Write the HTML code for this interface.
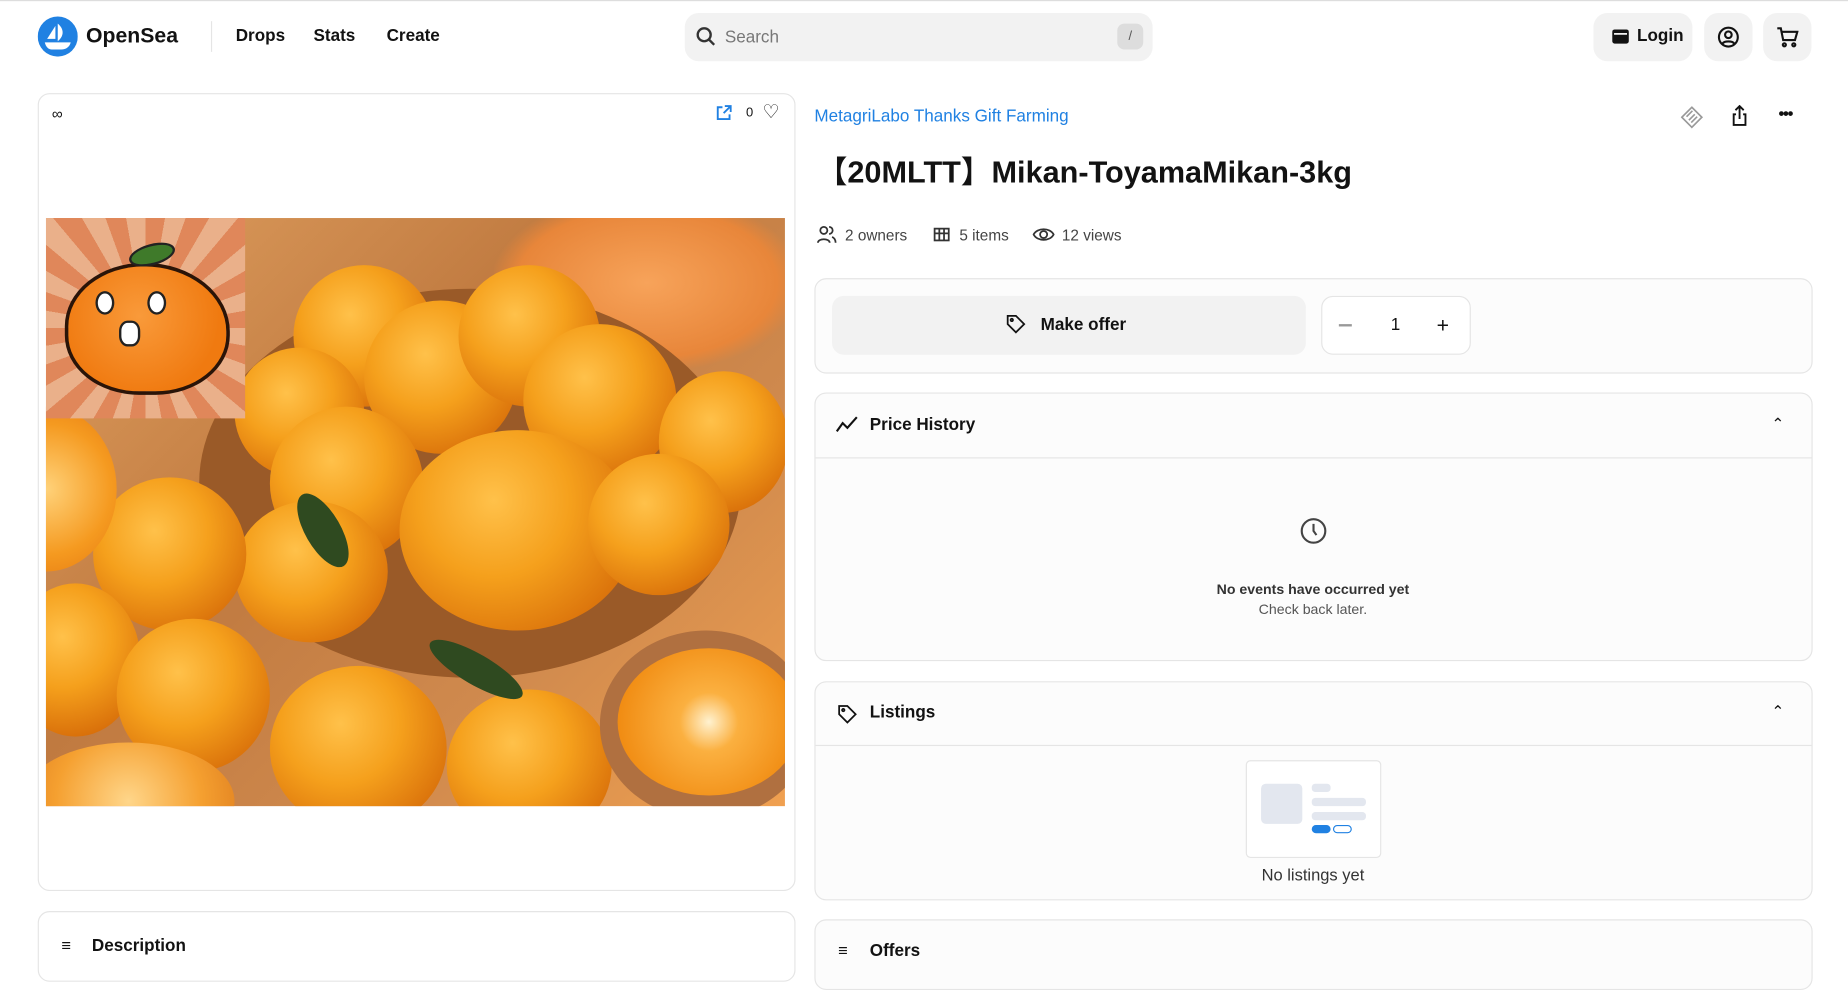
<!DOCTYPE html>
<html><head><meta charset="utf-8"><style>
*{box-sizing:border-box;margin:0;padding:0}
html,body{width:1848px;height:949px;overflow:hidden;background:#fff}
#w{position:absolute;left:0;top:0;width:1568px;height:805px;transform:scale(1.17857);transform-origin:0 0;font-family:"Liberation Sans",sans-serif;color:#121212}
.a{position:absolute}
.card{position:absolute;border:1px solid #e5e5e5;border-radius:10px;background:#fff}
.rc{background:#fcfcfc}
.btn{position:absolute;background:#f2f2f2;border-radius:12px}
.o{position:absolute;border-radius:50%;background:radial-gradient(circle at 40% 35%,#ffc14a 0%,#f5a01c 40%,#d9700a 80%,#8a3c05 100%)}
.h{font-size:14.5px;font-weight:600}
</style></head><body><div id="w">
<div class="a" style="left:0;top:0;width:1568px;height:1px;background:#ddd"></div>
<svg class="a" style="left:32px;top:14px" width="34" height="34" viewBox="0 0 34 34"><circle cx="17" cy="17" r="17" fill="#2081e2"/><path d="M8 19 L15 8 V19 Z" fill="#fff"/><path d="M17 6 C22 10 23 16 17 21 Z" fill="#fff"/><path d="M6 22 H28 C27 26 24 28 20 28 H12 C9 28 7 26 6 22 Z" fill="#fff"/></svg>
<div class="a" style="left:73px;top:20px;font-size:18px;font-weight:bold">OpenSea</div>
<div class="a" style="left:179px;top:18px;width:1px;height:26px;background:#e5e5e5"></div>
<div class="a h" style="left:200px;top:23px">Drops</div>
<div class="a h" style="left:266px;top:23px">Stats</div>
<div class="a h" style="left:328px;top:23px">Create</div>
<div class="btn" style="left:581px;top:11px;width:397px;height:41px"></div>
<svg class="a" style="left:590px;top:22px" width="18" height="18" viewBox="0 0 18 18" fill="none" stroke="#333" stroke-width="2"><circle cx="7.5" cy="7.5" r="5.5"/><path d="M11.5 11.5L16 16"/></svg>
<div class="a" style="left:615px;top:24px;font-size:14.5px;color:#777">Search</div>
<div class="a" style="left:948px;top:20px;width:22px;height:22px;background:#ddd;border-radius:6px;font-size:11px;color:#555;text-align:center;line-height:22px">/</div>
<div class="btn" style="left:1352px;top:11px;width:84px;height:41px"></div>
<svg class="a" style="left:1367px;top:24px" width="16" height="14" viewBox="0 0 16 14"><rect x="1" y="1" width="14" height="12" rx="2" fill="#121212"/><rect x="2.5" y="4" width="11" height="1.5" fill="#f2f2f2"/></svg>
<div class="a h" style="left:1389px;top:23px">Login</div>
<div class="btn" style="left:1446px;top:11px;width:41px;height:41px"></div>
<svg class="a" style="left:1457px;top:22px" width="19" height="19" viewBox="0 0 19 19" fill="none" stroke="#121212" stroke-width="1.8"><circle cx="9.5" cy="9.5" r="8"/><circle cx="9.5" cy="7.5" r="2.8"/><path d="M4.5 15c1.5-2.5 8.5-2.5 10 0"/></svg>
<div class="btn" style="left:1496px;top:11px;width:41px;height:41px"></div>
<svg class="a" style="left:1507px;top:22px" width="19" height="19" viewBox="0 0 19 19" fill="none" stroke="#121212" stroke-width="1.8"><path d="M1 2h3l2 10h10l2-7H5"/><circle cx="7" cy="16" r="1.3"/><circle cx="15" cy="16" r="1.3"/></svg>

<div class="card" style="left:32px;top:79px;width:643px;height:677px"></div>
<div class="a" style="left:44px;top:89px;font-size:13px">∞</div>
<svg class="a" style="left:607px;top:89px" width="14" height="14" viewBox="0 0 14 14" fill="none" stroke="#2081e2" stroke-width="1.6"><path d="M6 2H2v10h10V8M8 1h5v5M13 1L7 7"/></svg>
<div class="a" style="left:633px;top:90px;font-size:11px">0</div>
<div class="a" style="left:647px;top:85px;font-size:16px">♡</div>
<div class="a" style="left:39px;top:185px;width:627px;height:499px;overflow:hidden;background:linear-gradient(135deg,#e0a060,#c07a40 40%,#d08a4e 70%,#f0a050)">
 <div class="a" style="left:380px;top:-20px;width:260px;height:150px;background:radial-gradient(ellipse at 50% 50%,#f7a35a,#e8863a 60%,transparent 72%)"></div>
 <div class="a" style="left:130px;top:60px;width:460px;height:330px;border-radius:50%;background:#9a5a28"></div>
 <div class="o" style="left:210px;top:40px;width:120px;height:120px"></div>
 <div class="o" style="left:270px;top:70px;width:130px;height:130px"></div>
 <div class="o" style="left:350px;top:40px;width:120px;height:120px"></div>
 <div class="o" style="left:405px;top:90px;width:130px;height:130px"></div>
 <div class="o" style="left:160px;top:110px;width:110px;height:110px"></div>
 <div class="o" style="left:520px;top:130px;width:110px;height:120px"></div>
 <div class="o" style="left:190px;top:160px;width:130px;height:130px"></div>
 <div class="o" style="left:300px;top:180px;width:200px;height:170px"></div>
 <div class="o" style="left:460px;top:200px;width:120px;height:120px"></div>
 <div class="o" style="left:160px;top:240px;width:130px;height:120px"></div>
 <div class="o" style="left:40px;top:220px;width:130px;height:130px"></div>
 <div class="o" style="left:-30px;top:310px;width:110px;height:130px"></div>
 <div class="o" style="left:60px;top:340px;width:130px;height:130px"></div>
 <div class="o" style="left:190px;top:380px;width:150px;height:140px"></div>
 <div class="o" style="left:340px;top:400px;width:140px;height:130px"></div>
 <div class="a" style="left:470px;top:350px;width:180px;height:160px;border-radius:50%;background:#b07040"></div>
 <div class="a" style="left:485px;top:365px;width:155px;height:125px;border-radius:50%;background:radial-gradient(circle,#fff2d0 0%,#fbb040 25%,#f08a10 80%)"></div>
 <div class="a" style="left:-60px;top:160px;width:120px;height:140px;border-radius:50%;background:radial-gradient(circle,#ffd27a,#f59a20 60%,#e57810)"></div>
 <div class="a" style="left:-20px;top:445px;width:180px;height:100px;border-radius:50%;background:radial-gradient(circle,#ffd68a,#f5a030 60%,#e08020)"></div>
 <div class="a" style="left:200px;top:250px;width:70px;height:30px;border-radius:50%;background:#2f4a20;transform:rotate(60deg)"></div>
 <div class="a" style="left:320px;top:370px;width:90px;height:26px;border-radius:50%;background:#2f4a20;transform:rotate(30deg)"></div>
 <div class="a" style="left:0;top:0;width:169px;height:170px;background:repeating-conic-gradient(from 0deg at 50% 55%,#e0875a 0 10deg,#eab08a 10deg 20deg)"></div>
 <div class="a" style="left:16px;top:38px;width:140px;height:112px;border-radius:48% 52% 45% 45%;background:radial-gradient(circle at 45% 40%,#f99a3a,#f07a10 70%);border:3px solid #2a1408"></div>
 <div class="a" style="left:42px;top:62px;width:16px;height:20px;border-radius:50%;background:#fff;border:2px solid #222"></div>
 <div class="a" style="left:86px;top:62px;width:16px;height:20px;border-radius:50%;background:#fff;border:2px solid #222"></div>
 <div class="a" style="left:62px;top:87px;width:18px;height:22px;border-radius:40%;background:#fff;border:2px solid #222"></div>
 <div class="a" style="left:70px;top:22px;width:40px;height:18px;border-radius:50%;background:#3f7a2a;border:2px solid #222;transform:rotate(-15deg)"></div>
</div>
<div class="card" style="left:32px;top:773px;width:643px;height:60px"></div>
<div class="a" style="left:52px;top:794px;font-size:14px">≡</div>
<div class="a h" style="left:78px;top:795px">Description</div>

<div class="a" style="left:691px;top:91px;font-size:14.5px;color:#2081e2">MetagriLabo Thanks Gift Farming</div>
<svg class="a" style="left:1426px;top:90px" width="19" height="19" viewBox="0 0 19 19" fill="none" stroke="#999" stroke-width="1.4"><path d="M9.5 1L18 9.5 9.5 18 1 9.5Z"/><path d="M5 9l5-5M7 12l5-5M9 14l5-5"/></svg>
<svg class="a" style="left:1469px;top:89px" width="14" height="18" viewBox="0 0 14 18" fill="none" stroke="#121212" stroke-width="1.6"><path d="M7 12V1M3.5 4.5L7 1l3.5 3.5M4 8H2v9h10V8h-2"/></svg>
<div class="a" style="left:1509px;top:88px;font-size:14px;font-weight:bold;letter-spacing:-1px">•••</div>
<div class="a" style="left:693px;top:126px;font-size:26px;font-weight:600;font-family:'Liberation Sans','Noto Sans CJK JP',sans-serif">【20MLTT】Mikan-ToyamaMikan-3kg</div>
<svg class="a" style="left:693px;top:191px" width="17" height="16" viewBox="0 0 17 16" fill="none" stroke="#333" stroke-width="1.5"><circle cx="6" cy="4.5" r="3"/><path d="M1 15c0-4 10-4 10 0M10.5 1.5a3 3 0 010 6M13 10c2 .8 3 2.5 3 5"/></svg>
<div class="a" style="left:717px;top:192px;font-size:13px;color:#444">2 owners</div>
<svg class="a" style="left:792px;top:193px" width="14" height="12" viewBox="0 0 14 12" fill="none" stroke="#333" stroke-width="1.5"><rect x="1" y="1" width="12" height="10"/><path d="M1 5h12M5 1v10M9 1v10"/></svg>
<div class="a" style="left:814px;top:192px;font-size:13px;color:#444">5 items</div>
<svg class="a" style="left:876px;top:192px" width="19" height="14" viewBox="0 0 19 14" fill="none" stroke="#333" stroke-width="1.5"><path d="M1 7C4 1 15 1 18 7 15 13 4 13 1 7Z"/><circle cx="9.5" cy="7" r="3"/></svg>
<div class="a" style="left:901px;top:192px;font-size:13px;color:#444">12 views</div>

<div class="card rc" style="left:691px;top:236px;width:847px;height:81px"></div>
<div class="a" style="left:706px;top:251px;width:402px;height:50px;background:#f2f2f2;border-radius:10px"></div>
<svg class="a" style="left:853px;top:266px" width="18" height="18" viewBox="0 0 18 18" fill="none" stroke="#121212" stroke-width="1.5"><path d="M2 2h7l7 7-7 7-7-7Z"/><circle cx="5.5" cy="5.5" r="1"/></svg>
<div class="a h" style="left:883px;top:268px">Make offer</div>
<div class="a" style="left:1121px;top:251px;width:127px;height:50px;border:1px solid #e5e5e5;border-radius:10px;background:#fff"></div>
<div class="a" style="left:1136px;top:275px;width:11px;height:1.5px;background:#999"></div>
<div class="a" style="left:1180px;top:268px;font-size:14.5px">1</div>
<div class="a" style="left:1219px;top:266px;font-size:18px">+</div>

<div class="card rc" style="left:691px;top:333px;width:847px;height:228px"></div>
<div class="a" style="left:692px;top:388px;width:845px;height:1px;background:#e5e5e5"></div>
<svg class="a" style="left:709px;top:353px" width="19" height="14" viewBox="0 0 19 14" fill="none" stroke="#121212" stroke-width="1.8"><path d="M1 13L6 6l4 4 8-9"/></svg>
<div class="a h" style="left:738px;top:353px">Price History</div>
<div class="a" style="left:1503px;top:352px;font-size:13px">⌃</div>
<svg class="a" style="left:1103px;top:439px" width="23" height="23" viewBox="0 0 23 23" fill="none" stroke="#444" stroke-width="1.8"><circle cx="11.5" cy="11.5" r="10"/><path d="M11.5 5.5v6l2.5 3.5"/></svg>
<div class="a" style="left:991px;top:493px;width:246px;text-align:center;font-size:12px;font-weight:600;color:#333">No events have occurred yet</div>
<div class="a" style="left:991px;top:510px;width:246px;text-align:center;font-size:12px;color:#555">Check back later.</div>

<div class="card rc" style="left:691px;top:578px;width:847px;height:186px"></div>
<div class="a" style="left:692px;top:632px;width:845px;height:1px;background:#e5e5e5"></div>
<svg class="a" style="left:710px;top:597px" width="18" height="18" viewBox="0 0 18 18" fill="none" stroke="#121212" stroke-width="1.5"><path d="M2 2h7l7 7-7 7-7-7Z"/><circle cx="5.5" cy="5.5" r="1"/></svg>
<div class="a h" style="left:738px;top:597px">Listings</div>
<div class="a" style="left:1503px;top:596px;font-size:13px">⌃</div>
<div class="a" style="left:1057px;top:645px;width:115px;height:83px;border:1px solid #e5e5e5;border-radius:4px;background:#fff"></div>
<div class="a" style="left:1070px;top:665px;width:35px;height:34px;background:#e3e7ef;border-radius:4px"></div>
<div class="a" style="left:1113px;top:665px;width:16px;height:7px;background:#e3e7ef;border-radius:3px"></div>
<div class="a" style="left:1113px;top:677px;width:46px;height:7px;background:#e3e7ef;border-radius:3px"></div>
<div class="a" style="left:1113px;top:689px;width:46px;height:7px;background:#e3e7ef;border-radius:3px"></div>
<div class="a" style="left:1113px;top:700px;width:16px;height:7px;background:#2081e2;border-radius:4px"></div>
<div class="a" style="left:1131px;top:700px;width:16px;height:7px;border:1px solid #2081e2;border-radius:4px"></div>
<div class="a" style="left:1014px;top:734px;width:200px;text-align:center;font-size:14px;color:#333">No listings yet</div>

<div class="card rc" style="left:691px;top:780px;width:847px;height:60px"></div>
<div class="a" style="left:711px;top:798px;font-size:14px">≡</div>
<div class="a h" style="left:738px;top:799px">Offers</div>
</div></body></html>
